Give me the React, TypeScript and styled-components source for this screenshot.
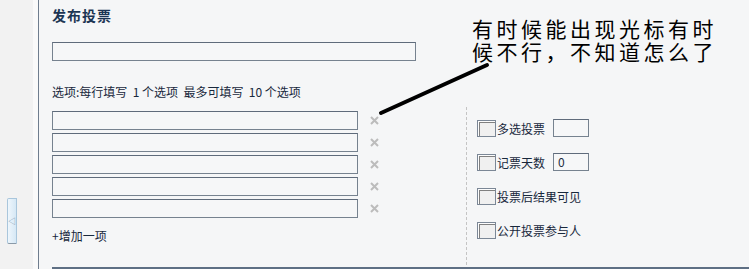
import * as React from "react";
import styled, { createGlobalStyle } from "styled-components";

const GlobalStyle = createGlobalStyle`
  html, body {
    margin: 0;
    padding: 0;
    background: #f5f6f7;
  }
  body {
    font-family: "Noto Sans CJK SC", "DejaVu Sans", sans-serif;
    font-size: 12px;
    color: #1c2b3e;
  }
`;

const Page = styled.div`
  position: relative;
  display: flex;
  width: 749px;
  height: 269px;
  overflow: hidden;
`;

const SideStrip = styled.div`
  width: 38px;
  flex-shrink: 0;
  display: flex;
  flex-direction: column;
  background: linear-gradient(to right, #f2f2f2 33px, #fafafa 33px);
  border-right: 1px solid #6f7d8e;
`;

const CollapseTab = styled.div`
  margin: 198px 0 0 7px;
  width: 8px;
  height: 44px;
  display: flex;
  align-items: center;
  justify-content: center;
  background: linear-gradient(to right, #eef6fc, #d6e8f5);
  border: 1px solid #a9c6dc;
  border-bottom-color: #8a9aa8;
  border-radius: 2px 0 0 2px;
  color: #7a95ad;
  font-size: 8px;
  line-height: 8px;
`;

const Main = styled.div`
  flex: 1;
  display: flex;
  flex-direction: column;
  padding-left: 13px;
  background: #f5f6f7;
`;

const Content = styled.div`
  flex: 1;
  display: flex;
  flex-direction: column;
  border-bottom: 2px solid #5e6f84;
`;

const Title = styled.h2`
  margin: 8px 0 0;
  font-size: 14px;
  line-height: 14px;
  letter-spacing: 1px;
  font-weight: bold;
  color: #1c3553;
`;

const TextBox = styled.div<{ $width: number }>`
  box-sizing: border-box;
  width: ${(p) => p.$width}px;
  height: 19px;
  border: 1px solid #76828f;
  border-top-color: #5f6b7b;
  background: #f6f7f8;
  padding-left: 5px;
  font-size: 12px;
  line-height: 17px;
  color: #1c2b3e;
`;

const TitleBox = styled(TextBox)`
  margin-top: 20px;
`;

const Hint = styled.div`
  margin-top: 24px;
  font-size: 12px;
  line-height: 14px;
  color: #18283c;
  white-space: pre;
`;

const Body = styled.div`
  display: flex;
  margin-top: 12px;
`;

const OptionsColumn = styled.div`
  width: 414px;
  display: flex;
  flex-direction: column;
  gap: 3px;
`;

const OptionRow = styled.div`
  display: flex;
  align-items: center;
`;

const RemoveIcon = styled.svg`
  margin-left: 12px;
  width: 9px;
  height: 9px;
`;

const AddLink = styled.div`
  margin-top: 8px;
  font-size: 12px;
  line-height: 14px;
  color: #18283c;
`;

const SettingsColumn = styled.div`
  margin-top: -4px;
  height: 146px;
  border-left: 1px dashed #c4c4c4;
  padding: 12px 0 0 10px;
  display: flex;
  flex-direction: column;
  gap: 16px;
`;

const SettingRow = styled.label`
  display: flex;
  align-items: center;
  height: 18px;
  font-size: 12px;
  color: #18283c;
`;

const CheckBox = styled.span`
  box-sizing: border-box;
  width: 19px;
  height: 17px;
  margin-right: 1px;
  border: 1px solid #7b8796;
  background: #f0f0f0;
  box-shadow: inset 1px 1px 0 #fdfdfd, inset 2px 2px 0 #808080;
`;

const SmallBox = styled(TextBox)`
  margin-left: 8px;
  height: 18px;
  padding-left: 4px;
  line-height: 16px;
`;

const Annotation = styled.div`
  position: absolute;
  left: 472px;
  top: 18px;
  display: flex;
  flex-direction: column;
  gap: 2px;
`;

const AnnotationLine = styled.div`
  font-size: 21px;
  line-height: 21px;
  letter-spacing: 3.5px;
  color: #000;
  white-space: nowrap;
`;

const Pointer = styled.svg`
  position: absolute;
  left: 0;
  top: 0;
  width: 749px;
  height: 269px;
  pointer-events: none;
`;

const Remove = () => (
  <RemoveIcon viewBox="0 0 9 9">
    <path d="M1 1 L8 8 M8 1 L1 8" stroke="#bcbcbc" strokeWidth="2" />
  </RemoveIcon>
);

const settings = [
  { label: "多选投票", box: "" },
  { label: "记票天数", box: "0" },
  { label: "投票后结果可见" },
  { label: "公开投票参与人" },
];

export default function App() {
  return (
    <Page>
      <GlobalStyle />
      <SideStrip>
        <CollapseTab>◁</CollapseTab>
      </SideStrip>
      <Main>
        <Content>
          <Title>发布投票</Title>
          <TitleBox $width={364} />
          <Hint>{"选项:每行填写  1 个选项  最多可填写  10 个选项"}</Hint>
          <Body>
            <OptionsColumn>
              {[0, 1, 2, 3, 4].map((i) => (
                <OptionRow key={i}>
                  <TextBox $width={306} />
                  <Remove />
                </OptionRow>
              ))}
              <AddLink>+增加一项</AddLink>
            </OptionsColumn>
            <SettingsColumn>
              {settings.map((s) => (
                <SettingRow key={s.label}>
                  <CheckBox />
                  {s.label}
                  {s.box !== undefined && <SmallBox $width={36}>{s.box}</SmallBox>}
                </SettingRow>
              ))}
            </SettingsColumn>
          </Body>
        </Content>
      </Main>
      <Pointer viewBox="0 0 749 269">
        <path d="M381 113 L487 65" stroke="#000" strokeWidth="4" strokeLinecap="round" />
      </Pointer>
      <Annotation>
        <AnnotationLine>有时候能出现光标有时</AnnotationLine>
        <AnnotationLine>候不行，不知道怎么了</AnnotationLine>
      </Annotation>
    </Page>
  );
}
